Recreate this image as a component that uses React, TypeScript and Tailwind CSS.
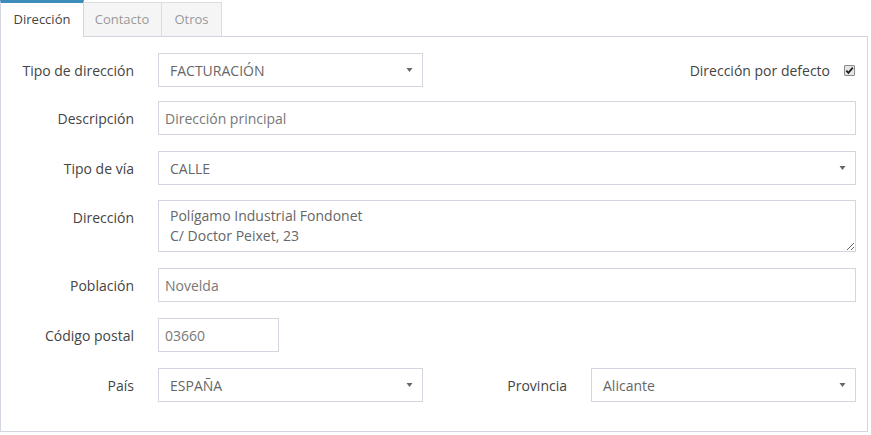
import React from "react";

const Arrow = () => (
  <svg width="7" height="5" viewBox="0 0 7 5" className="absolute right-[9px] top-1/2 -translate-y-1/2">
    <path d="M0.5 0.5 L6.5 0.5 L3.5 4.5 Z" fill="#666" />
  </svg>
);

const Select = ({ value, w }: { value: string; w: string }) => (
  <div className={`relative h-[34px] ${w} border border-[#d2d6de] bg-white flex items-center pl-[11px] text-[14px] text-[#666]`}>
    {value}
    <Arrow />
  </div>
);

const Input = ({ value, w }: { value: string; w: string }) => (
  <div className={`h-[34px] ${w} border border-[#d2d6de] bg-white flex items-center pl-[6px] text-[14px] text-[#777]`}>
    {value}
  </div>
);

const Label = ({ children, w = "w-[133px]" }: { children: React.ReactNode; w?: string }) => (
  <div className={`${w} shrink-0 text-right text-[14px] text-[#444]`}>{children}</div>
);

export default function App() {
  return (
    <div className="w-[871px] h-[435px] bg-white" style={{ fontFamily: '"Open Sans", sans-serif' }}>
      <div className="w-[868px]">
        <div className="flex h-[36px] items-end">
          <div className="h-[37px] w-[84px] bg-white border-t-[3px] border-t-[#3c8dbc] border-l border-r border-l-[#d2d6de] border-r-[#d2d6de] flex items-center justify-center text-[13px] text-[#444] relative z-10 -mb-px">
            Dirección
          </div>
          <div className="h-[34px] w-[79px] bg-[#f5f5f5] border-t border-r border-[#ddd] flex items-center justify-center text-[13px] text-[#999] -ml-px">
            Contacto
          </div>
          <div className="h-[34px] w-[60px] bg-[#f5f5f5] border-t border-r border-[#ddd] flex items-center justify-center text-[13px] text-[#999]">
            Otros
          </div>
        </div>
        <div className="border border-[#d2d6de] h-[396px] pt-[16px] pr-[11px] flex flex-col">
          <div className="flex items-center">
            <Label>Tipo de dirección</Label>
            <div className="ml-[24px]">
              <Select value="FACTURACIÓN" w="w-[265px]" />
            </div>
            <div className="flex-1 flex items-center justify-end text-[14px] text-[#444]">
              <span>Dirección por defecto</span>
              <span className="ml-[14px] mr-[1px] w-[11px] h-[11px] border border-[#8a8a8a] bg-[#e6e6e6] rounded-[1px] flex items-center justify-center">
                <svg width="9" height="9" viewBox="0 0 9 9">
                  <path d="M1.3 4.6 L3.4 6.8 L7.8 1.6" fill="none" stroke="#222" strokeWidth="1.8" />
                </svg>
              </span>
            </div>
          </div>
          <div className="flex items-center mt-[14px]">
            <Label>Descripción</Label>
            <div className="ml-[24px] flex-1">
              <Input value="Dirección principal" w="w-full" />
            </div>
          </div>
          <div className="flex items-center mt-[16px]">
            <Label>Tipo de vía</Label>
            <div className="ml-[24px] flex-1">
              <Select value="CALLE" w="w-full" />
            </div>
          </div>
          <div className="flex items-start mt-[15px]">
            <Label>
              <div className="pt-[7px]">Dirección</div>
            </Label>
            <div className="ml-[24px] flex-1 flex">
              <textarea
                readOnly
                defaultValue={"Polígamo Industrial Fondonet\nC/ Doctor Peixet, 23"}
                className="w-full h-[52px] border border-[#d2d6de] pl-[11px] pt-[5px] text-[14px] leading-[20px] text-[#666] outline-none resize-y"
                style={{ fontFamily: '"Open Sans", sans-serif' }}
              />
            </div>
          </div>
          <div className="flex items-center mt-[16px]">
            <Label>Población</Label>
            <div className="ml-[24px] flex-1">
              <Input value="Novelda" w="w-full" />
            </div>
          </div>
          <div className="flex items-center mt-[16px]">
            <Label>Código postal</Label>
            <div className="ml-[24px]">
              <Input value="03660" w="w-[121px]" />
            </div>
          </div>
          <div className="flex items-center mt-[16px]">
            <Label>País</Label>
            <div className="ml-[24px]">
              <Select value="ESPAÑA" w="w-[265px]" />
            </div>
            <Label w="w-[144px]">Provincia</Label>
            <div className="ml-[24px] flex-1">
              <Select value="Alicante" w="w-full" />
            </div>
          </div>
        </div>
      </div>
    </div>
  );
}
